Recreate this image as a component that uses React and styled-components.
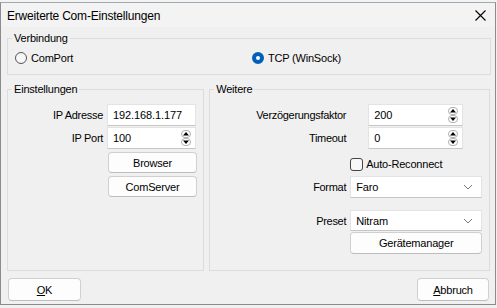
import React from 'react'
import styled, { createGlobalStyle } from 'styled-components'

const GlobalStyle = createGlobalStyle`
  html, body {
    margin: 0;
    padding: 0;
    background: #f0f0f0;
  }
  body {
    width: 497px;
    height: 308px;
    overflow: hidden;
    font-family: "Liberation Sans", Arial, sans-serif;
    font-size: 11px;
    color: #000;
  }
`

const Backdrop = styled.div`
  height: 2px;
  overflow: hidden;
  background: #f3f3f3;
`

const BackText = styled.div`
  margin: -11px 0 0 98px;
  font-size: 12px;
  line-height: 14px;
  color: #222;
`

const Window = styled.div`
  width: 494px;
  height: 301px;
  border: 1px solid #8c8c8c;
  border-top-color: #a0a8b0;
  background: #f0f0f0;
  display: flex;
  flex-direction: column;
`

const TitleBar = styled.div`
  height: 24px;
  display: flex;
  align-items: center;
  justify-content: space-between;
  background: #f3f3f3;
  padding: 0 9px 0 6px;
`

const Title = styled.div`
  font-size: 12px;
  letter-spacing: -0.2px;
  color: #000;
  padding-top: 2px;
`

const Body = styled.div`
  flex: 1;
  display: flex;
  flex-direction: column;
  padding: 4px 5px 0 6px;
`

const Group = styled.fieldset`
  margin: 0;
  padding: 0;
  border: 1px solid #dcdcdc;
  min-width: 0;
  width: ${p => p.$w}px;
  height: ${p => p.$h}px;
  box-sizing: border-box;
  display: flex;
  flex-direction: column;
`

const Legend = styled.legend`
  margin-left: 4px;
  padding: 0 2px;
  font-size: 11px;
  line-height: 14px;
  letter-spacing: -0.2px;
`

const RadioRow = styled.div`
  display: flex;
  align-items: center;
  padding: 7px 0 0 7px;
`

const RadioItem = styled.label`
  display: flex;
  align-items: center;
  gap: 4px;
  width: ${p => p.$w}px;
  letter-spacing: -0.2px;
`

const Radio = styled.span`
  width: 12px;
  height: 12px;
  box-sizing: border-box;
  border-radius: 50%;
  border: ${p => (p.$on ? '4px solid #005fb8' : '1px solid #555')};
  background: ${p => (p.$on ? '#fff' : '#f7f7f7')};
`

const Columns = styled.div`
  display: flex;
  gap: 5px;
  margin-top: 7px;
`

const Rows = styled.div`
  display: flex;
  flex-direction: column;
  padding-top: ${p => p.$top}px;
`

const Row = styled.div`
  display: flex;
  align-items: center;
  height: ${p => p.$h || 22}px;
  margin-top: ${p => p.$mt || 0}px;
`

const Label = styled.div`
  width: ${p => p.$w}px;
  text-align: right;
  letter-spacing: -0.3px;
  flex-shrink: 0;
`

const Field = styled.div`
  position: relative;
  width: ${p => p.$w}px;
  height: 100%;
  margin-left: ${p => p.$ml}px;
  box-sizing: border-box;
  background: #fff;
  border: 1px solid #e3e3e3;
  border-bottom-color: #c6c6c6;
  display: flex;
  align-items: center;
  padding-left: 5px;
  font-size: 11px;
  letter-spacing: -0.1px;
`

const Spin = styled.svg`
  position: absolute;
  right: 3px;
  top: 50%;
  margin-top: -8px;
`

const Chevron = styled.svg`
  position: absolute;
  right: 8px;
  top: 50%;
  margin-top: -3px;
`

const Button = styled.button`
  width: ${p => p.$w}px;
  height: ${p => p.$h || 21}px;
  margin-left: ${p => p.$ml || 0}px;
  box-sizing: border-box;
  background: #fdfdfd;
  border: 1px solid #d0d0d0;
  border-bottom-color: #bdbdbd;
  border-radius: 4px;
  font-family: inherit;
  font-size: 11px;
  letter-spacing: -0.2px;
  color: #000;
  padding: 0;
`

const CheckItem = styled.label`
  display: flex;
  align-items: center;
  gap: 3px;
  margin-left: ${p => p.$ml}px;
  letter-spacing: -0.2px;
`

const Box = styled.span`
  width: 13px;
  height: 13px;
  box-sizing: border-box;
  border: 1px solid #444;
  border-radius: 3px;
  background: #f8f8f8;
`

const Footer = styled.div`
  display: flex;
  justify-content: space-between;
  padding: 7px 1px 0 1px;
`

const Key = styled.span`
  text-decoration: underline;
`

const Spinner = () => (
  <Spin width="12" height="16" viewBox="0 0 12 16">
    <rect x="1.5" y="0.5" width="9" height="7" rx="3.5" fill="#fff" stroke="#b0b0b0" />
    <rect x="1.5" y="8.5" width="9" height="7" rx="3.5" fill="#fff" stroke="#b0b0b0" />
    <path d="M6 2 L9 5.5 L3 5.5 Z" fill="#000" />
    <path d="M6 14 L9 10.5 L3 10.5 Z" fill="#000" />
  </Spin>
)

const Select = ({ value, w, ml }) => (
  <Field $w={w} $ml={ml}>
    {value}
    <Chevron width="10" height="6" viewBox="0 0 10 6">
      <path d="M1 1 L5 5 L9 1" fill="none" stroke="#777" strokeWidth="1" />
    </Chevron>
  </Field>
)

export default function App() {
  return (
    <>
      <GlobalStyle />
      <Backdrop>
        <BackText>Bedienfeldern</BackText>
      </Backdrop>
      <Window>
        <TitleBar>
          <Title>Erweiterte Com-Einstellungen</Title>
          <svg width="11" height="11" viewBox="0 0 11 11">
            <path d="M0.5 0.5 L10.5 10.5 M10.5 0.5 L0.5 10.5" stroke="#000" strokeWidth="1.1" />
          </svg>
        </TitleBar>
        <Body>
          <Group $w={484} $h={44}>
            <Legend>Verbindung</Legend>
            <RadioRow>
              <RadioItem $w={237}>
                <Radio />
                <span>ComPort</span>
              </RadioItem>
              <RadioItem>
                <Radio $on />
                <span>TCP (WinSock)</span>
              </RadioItem>
            </RadioRow>
          </Group>
          <Columns>
            <Group $w={198} $h={189}>
              <Legend>Einstellungen</Legend>
              <Rows $top={8}>
                <Row>
                  <Label $w={95}>IP Adresse</Label>
                  <Field $w={89} $ml={4}>192.168.1.177</Field>
                </Row>
                <Row $mt={1}>
                  <Label $w={95}>IP Port</Label>
                  <Field $w={89} $ml={4}>100<Spinner /></Field>
                </Row>
                <Row $h={21} $mt={3}>
                  <Button $w={89} $ml={100}>Browser</Button>
                </Row>
                <Row $h={21} $mt={3}>
                  <Button $w={89} $ml={100}>ComServer</Button>
                </Row>
              </Rows>
            </Group>
            <Group $w={282} $h={189}>
              <Legend>Weitere</Legend>
              <Rows $top={8}>
                <Row>
                  <Label $w={136}>Verzögerungsfaktor</Label>
                  <Field $w={95} $ml={22}>200<Spinner /></Field>
                </Row>
                <Row $mt={1}>
                  <Label $w={136}>Timeout</Label>
                  <Field $w={95} $ml={22}>0<Spinner /></Field>
                </Row>
                <Row $h={14} $mt={8}>
                  <CheckItem $ml={140}>
                    <Box />
                    <span>Auto-Reconnect</span>
                  </CheckItem>
                </Row>
                <Row $mt={5}>
                  <Label $w={136}>Format</Label>
                  <Select value="Faro" w={132} ml={4} />
                </Row>
                <Row $h={21} $mt={12}>
                  <Label $w={136}>Preset</Label>
                  <Select value="Nitram" w={132} ml={4} />
                </Row>
                <Row $mt={1}>
                  <Button $w={132} $h={22} $ml={140}>Gerätemanager</Button>
                </Row>
              </Rows>
            </Group>
          </Columns>
          <Footer>
            <Button $w={73} $h={23}><Key>O</Key>K</Button>
            <Button $w={72} $h={23}><Key>A</Key>bbruch</Button>
          </Footer>
        </Body>
      </Window>
    </>
  )
}
